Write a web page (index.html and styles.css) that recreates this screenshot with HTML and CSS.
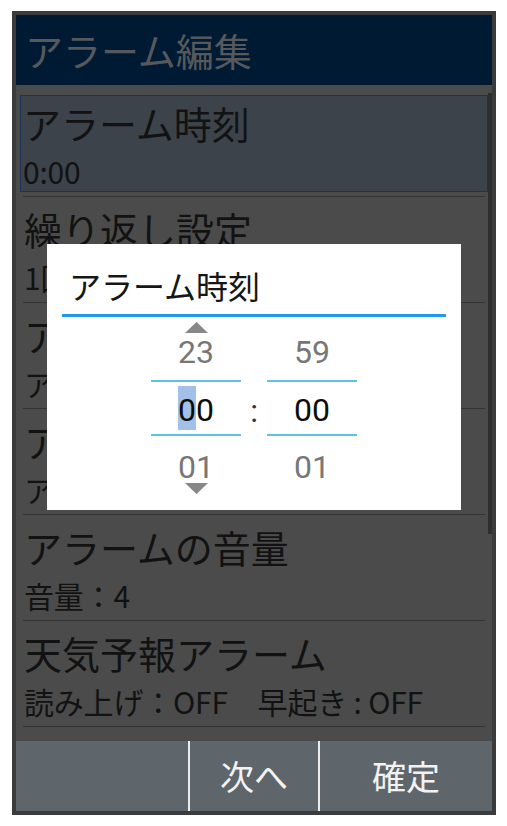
FILE: index.html
```html
<!DOCTYPE html>
<html lang="ja">
<head>
<meta charset="utf-8">
<title>アラーム編集</title>
<link rel="stylesheet" href="styles.css">
</head>
<body>
<div class="device">
  <div class="screen">
    <header class="appbar">アラーム編集</header>
    <div class="list">
      <div class="scrollbar"></div>
      <div class="row"><div class="item focused"><div class="title">アラーム時刻</div><div class="sub">0:00</div></div></div>
      <div class="sep"></div>
      <div class="row"><div class="item"><div class="title">繰り返し設定</div><div class="sub">1回のみ</div></div></div>
      <div class="sep"></div>
      <div class="row"><div class="item"><div class="title">アラーム音</div><div class="sub">アラーム1</div></div></div>
      <div class="sep"></div>
      <div class="row"><div class="item"><div class="title">アラーム時間</div><div class="sub">アラーム：1分</div></div></div>
      <div class="sep"></div>
      <div class="row"><div class="item"><div class="title">アラームの音量</div><div class="sub">音量：4</div></div></div>
      <div class="sep"></div>
      <div class="row"><div class="item"><div class="title">天気予報アラーム</div><div class="sub">読み上げ：OFF　早起き : OFF</div></div></div>
      <div class="sep"></div>
    </div>
    <footer class="softkeys">
      <div class="key key-left"></div>
      <div class="key key-mid">次へ</div>
      <div class="key key-right">確定</div>
    </footer>
  </div>

  <div class="dialog">
    <div class="dlg-title">アラーム時刻</div>
    <div class="dlg-rule"></div>
    <div class="picker">
      <div class="col">
        <svg class="arrow" width="23" height="11" viewBox="0 0 23 11"><polygon points="0,11 11.5,0 23,11" fill="#878787"/></svg>
        <div class="cell prev">23</div>
        <div class="selected"><span class="val hl">0</span><span class="val">0</span></div>
        <div class="cell next">01</div>
        <svg class="arrow down" width="23" height="11" viewBox="0 0 23 11"><polygon points="0,0 23,0 11.5,11" fill="#878787"/></svg>
      </div>
      <div class="colon">:</div>
      <div class="col">
        <div class="arrow-space"></div>
        <div class="cell prev">59</div>
        <div class="selected"><span class="val">00</span></div>
        <div class="cell next">01</div>
        <div class="arrow-space down"></div>
      </div>
    </div>
  </div>
</div>
</body>
</html>
```
FILE: styles.css
```css
* { box-sizing: border-box; }

html, body {
  margin: 0;
  padding: 0;
  background: #ffffff;
}

body {
  font-family: "Noto Sans CJK JP", "Noto Sans", sans-serif;
}

.device {
  position: relative;
  box-sizing: content-box;
  width: 476px;
  height: 796px;
  margin: 11px 0 0 12px;
  border: 4px solid #3b3b3b;
}

.screen {
  display: flex;
  flex-direction: column;
  width: 100%;
  height: 100%;
  background: #4b4b4b;
}

.appbar {
  flex: 0 0 70px;
  display: flex;
  align-items: center;
  padding-left: 9px;
  background: #001a33;
  color: #56595c;
  font-size: 38px;
  line-height: 44px;
}

.list {
  position: relative;
  flex: 1 1 auto;
  padding-top: 6px;
  display: flex;
  flex-direction: column;
}

.scrollbar {
  position: absolute;
  right: 0;
  top: 8px;
  width: 4px;
  height: 441px;
  background: #2e2e2e;
}

.row {
  height: 105px;
  padding: 4px 4px;
}

.item {
  height: 97px;
  border: 1px solid transparent;
  padding: 5px 0 0 3px;
  color: #121212;
  white-space: nowrap;
  overflow: hidden;
}

.item.focused {
  background: #3d434b;
  border-color: #1b3356;
  padding-left: 2px;
}

.title {
  font-size: 38px;
  line-height: 44px;
}

.sub {
  margin-top: 9px;
  font-size: 30px;
  line-height: 34px;
  letter-spacing: -0.2px;
}

.sep {
  height: 1px;
  margin: 0 7px;
  background: #333333;
}

.softkeys {
  flex: 0 0 70px;
  display: flex;
  background: #5e666c;
}

.key {
  display: flex;
  align-items: center;
  justify-content: center;
  color: #f2f2f2;
  font-size: 34px;
  line-height: 40px;
}

.key-left { width: 172px; }
.key-mid { width: 130px; border-left: 2px solid #ececec; }
.key-right { width: 174px; border-left: 2px solid #ececec; }

/* dialog */
.dialog {
  position: absolute;
  left: 31px;
  top: 229px;
  width: 414px;
  padding: 21px 0 16px;
  background: #ffffff;
}

.dlg-title {
  padding-left: 22px;
  font-size: 32px;
  line-height: 40px;
  color: #161616;
}

.dlg-rule {
  height: 3px;
  margin: 9px 15px 0;
  background: #2299ee;
}

.picker {
  display: flex;
  justify-content: center;
  margin-top: 5px;
  font-family: Roboto, "Noto Sans", sans-serif;
  font-size: 32px;
}

.col {
  width: 90px;
  display: flex;
  flex-direction: column;
  align-items: center;
}

.arrow { display: block; }
.arrow.down { margin-top: 1px; }

.arrow-space { width: 23px; height: 11px; }
.arrow-space.down { margin-top: 1px; }

.cell {
  line-height: 30px;
  color: #777777;
  text-align: center;
}

.cell.prev { margin-top: 4px; }
.cell.next { margin-top: 16px; }

.selected {
  align-self: stretch;
  height: 56px;
  margin-top: 13px;
  padding: 4px 0;
  border-top: 2px solid #5bc3e9;
  border-bottom: 2px solid #5bc3e9;
  text-align: center;
  line-height: 40px;
  color: #0d0d0d;
}

.val {
  display: inline-block;
  vertical-align: top;
  height: 44px;
  padding-top: 4px;
  line-height: 40px;
}

.hl {
  background: #a2c1e8;
}

.colon {
  width: 26px;
  display: flex;
  align-items: center;
  justify-content: center;
  padding-top: 6px;
  line-height: 30px;
  color: #333333;
}
```
